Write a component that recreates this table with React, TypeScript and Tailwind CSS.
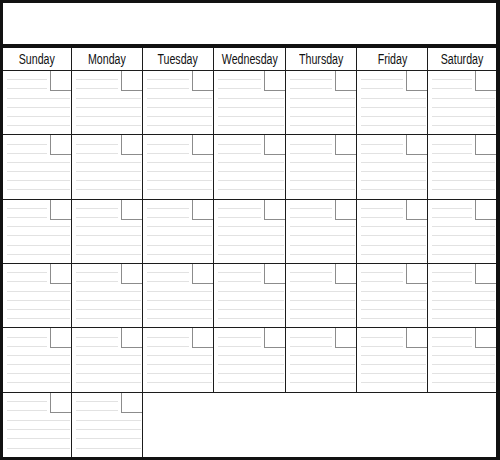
// Monthly wall calendar (blank)

const DAYS = ["Sunday", "Monday", "Tuesday", "Wednesday", "Thursday", "Friday", "Saturday"];
const COLS = "grid grid-cols-[69px_71px_71px_72px_71px_71px_1fr]";

function DayCell({ right = true, bottom = true }: { right?: boolean; bottom?: boolean }) {
  return (
    <div
      className={
        "relative flex flex-col border-[#1c1c1c] " +
        (right ? "border-r " : "") +
        (bottom ? "border-b" : "")
      }
    >
      {/* ruled writing lines */}
      {[0, 1, 2, 3, 4, 5].map((i) => (
        <div key={i} className="flex-1 ml-1 mr-px border-b border-[#e2e2e2]" />
      ))}
      <div className="flex-1" />
      {/* date box */}
      <div className="absolute top-0 right-0 w-[21px] h-[20px] bg-white border-l border-b border-[#8c8c8c] shadow-[-3px_0_0_white]" />
    </div>
  );
}

export default function App() {
  return (
    <div className="w-[500px] h-[460px] bg-white flex flex-col border-l-[3px] border-t-[3px] border-b-[3px] border-r-4 border-[#111] font-['Liberation_Sans',Arial,sans-serif]">
      {/* title area */}
      <div className="h-[45px] shrink-0 border-b-4 border-[#111]" />

      {/* weekday header */}
      <div className={COLS + " h-[23px] shrink-0"}>
        {DAYS.map((d, i) => (
          <div
            key={d}
            className={
              "flex items-center justify-center border-b border-[#1c1c1c] " +
              (i < 6 ? "border-r" : "")
            }
          >
            <span className="inline-block scale-x-[0.76] text-[14px] leading-none text-[#111] whitespace-nowrap">
              {d}
            </span>
          </div>
        ))}
      </div>

      {/* day grid */}
      <div className={COLS + " flex-1 grid-rows-6"}>
        {Array.from({ length: 35 }).map((_, i) => (
          <DayCell key={i} right={i % 7 !== 6} />
        ))}
        <DayCell bottom={false} />
        <DayCell bottom={false} />
        <div className="col-span-5" />
      </div>
    </div>
  );
}
